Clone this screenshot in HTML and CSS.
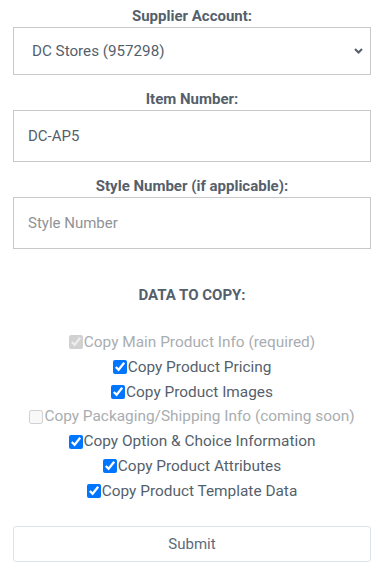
FILE: index.html
```html
<!DOCTYPE html>
<html>
<head>
<meta charset="utf-8">
<link rel="stylesheet" href="styles.css">
</head>
<body>
<form class="form">
  <div class="field">
    <label class="label">Supplier Account:</label>
    <div class="select-box">
      <span class="select-text">DC Stores (957298)</span>
      <svg class="chev" width="9" height="6" viewBox="0 0 9 6"><path d="M1 1 L4.5 4.5 L8 1" fill="none" stroke="#555f6c" stroke-width="2"/></svg>
    </div>
  </div>
  <div class="field">
    <label class="label">Item Number:</label>
    <div class="input">DC-AP5</div>
  </div>
  <div class="field">
    <label class="label">Style Number (if applicable):</label>
    <div class="input placeholder">Style Number</div>
  </div>
  <div class="section-title">DATA TO COPY:</div>
  <div class="checks">
    <label class="check disabled"><input type="checkbox" checked disabled>Copy Main Product Info (required)</label>
    <label class="check"><input type="checkbox" checked>Copy Product Pricing</label>
    <label class="check"><input type="checkbox" checked>Copy Product Images</label>
    <label class="check disabled"><input type="checkbox" disabled>Copy Packaging/Shipping Info (coming soon)</label>
    <label class="check"><input type="checkbox" checked>Copy Option &amp; Choice Information</label>
    <label class="check"><input type="checkbox" checked>Copy Product Attributes</label>
    <label class="check"><input type="checkbox" checked>Copy Product Template Data</label>
  </div>
  <button type="button" class="submit">Submit</button>
</form>
</body>
</html>
```
FILE: styles.css
```css
html, body {
  margin: 0;
  padding: 0;
  background: #fff;
}
body {
  font-family: Roboto, "Liberation Sans", sans-serif;
  color: #555f6c;
}
.form {
  padding: 6px 13px 0 13px;
  display: flex;
  flex-direction: column;
}
.field {
  display: flex;
  flex-direction: column;
  margin-bottom: 14px;
}
.label {
  text-align: center;
  font-weight: 700;
  font-size: 15px;
  line-height: 20px;
  margin-bottom: 1px;
}
.select-box {
  height: 46px;
  border: 1px solid #c8c8c8;
  display: flex;
  align-items: center;
  justify-content: space-between;
  padding: 0 7px 0 18px;
  font-size: 15.2px;
}
.input {
  height: 50px;
  border: 1px solid #c8c8c8;
  display: flex;
  align-items: center;
  padding: 0 14px;
  font-size: 15px;
}
.placeholder {
  color: #8f9397;
}
.section-title {
  text-align: center;
  font-weight: 700;
  font-size: 15px;
  line-height: 20px;
  margin-top: 22px;
  margin-bottom: 25px;
}
.checks {
  display: flex;
  flex-direction: column;
  align-items: center;
}
.check {
  font-size: 15.4px;
  line-height: 24.8px;
  display: flex;
  align-items: center;
}
.check input {
  margin: 0 1px 0 0;
  width: 14px;
  height: 14px;
}
.check.disabled {
  color: #a9adb1;
}
.submit {
  margin-top: 22px;
  height: 36px;
  background: #fff;
  border: 1px solid #dbe4ee;
  border-radius: 3px;
  font-family: Roboto, "Liberation Sans", sans-serif;
  font-size: 15px;
  color: #5b6b7c;
}
```
